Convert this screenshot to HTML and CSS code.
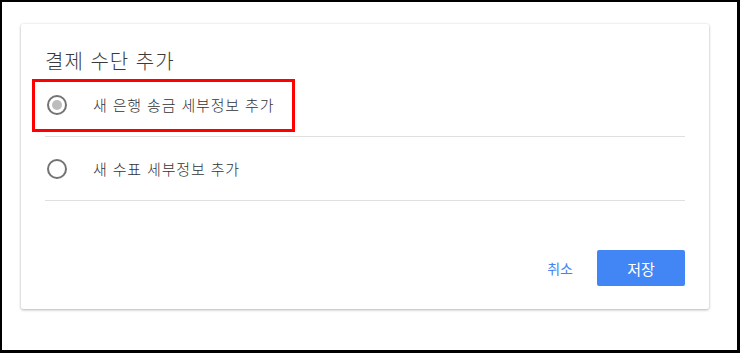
FILE: index.html
```html
<!DOCTYPE html>
<html lang="ko">
<head>
<meta charset="utf-8">
<title>결제 수단 추가</title>
<link rel="stylesheet" href="styles.css">
</head>
<body>
<div class="frame">
  <div class="card">
    <h1 class="title">결제 수단 추가</h1>
    <ul class="options">
      <li class="option">
        <span class="radio checked"></span>
        <span class="label">새 은행 송금 세부정보 추가</span>
      </li>
      <li class="option">
        <span class="radio"></span>
        <span class="label">새 수표 세부정보 추가</span>
      </li>
    </ul>
    <div class="actions">
      <button class="btn btn-text">취소</button>
      <button class="btn btn-primary">저장</button>
    </div>
    <div class="highlight"></div>
  </div>
</div>
</body>
</html>
```

FILE: styles.css
```css
* { box-sizing: border-box; }
html, body { margin: 0; padding: 0; background: #fff; }
body {
  font-family: "Noto Sans CJK KR", "Noto Sans", sans-serif;
  color: #333;
}
.frame {
  width: 740px;
  height: 353px;
  border-style: solid;
  border-color: #000;
  border-width: 2px 3px 3px 2px;
  padding: 22px 0 0 19px;
}
.card {
  position: relative;
  width: 688px;
  height: 285px;
  background: #fff;
  border-radius: 2px;
  box-shadow: 0 1px 3px rgba(0,0,0,0.28), 0 0 2px rgba(0,0,0,0.08);
  padding: 25px 24px 0 24px;
}
.title {
  margin: 0;
  font-size: 20px;
  line-height: 24px;
  font-weight: 300;
  letter-spacing: 1px;
  color: #3a3a3a;
}
.options {
  list-style: none;
  margin: 0;
  padding: 0;
}
.option {
  display: flex;
  align-items: center;
  height: 64px;
  border-bottom: 1px solid #e0e0e0;
}
.radio {
  width: 20px;
  height: 20px;
  margin-left: 2px;
  border: 2px solid #737373;
  border-radius: 50%;
  display: flex;
  align-items: center;
  justify-content: center;
  flex: none;
}
.radio.checked::after {
  content: "";
  width: 10px;
  height: 10px;
  border-radius: 50%;
  background: #bdbdbd;
}
.label {
  margin-left: 26px;
  font-size: 15px;
  line-height: 20px;
  font-weight: 300;
  letter-spacing: 0.85px;
  color: #333;
}
.actions {
  display: flex;
  justify-content: flex-end;
  gap: 8px;
  margin-top: 49px;
}
.btn {
  font-family: inherit;
  font-size: 14px;
  height: 36px;
  border: none;
  border-radius: 2px;
  padding: 0 16px;
  cursor: pointer;
}
.btn-text {
  background: transparent;
  color: #4285f4;
}
.btn-primary {
  width: 88px;
  background: #4285f4;
  color: #fff;
  font-size: 15px;
}
.highlight {
  position: absolute;
  left: 11px;
  top: 55px;
  width: 263px;
  height: 53px;
  border: 3px solid #f00;
}
```
